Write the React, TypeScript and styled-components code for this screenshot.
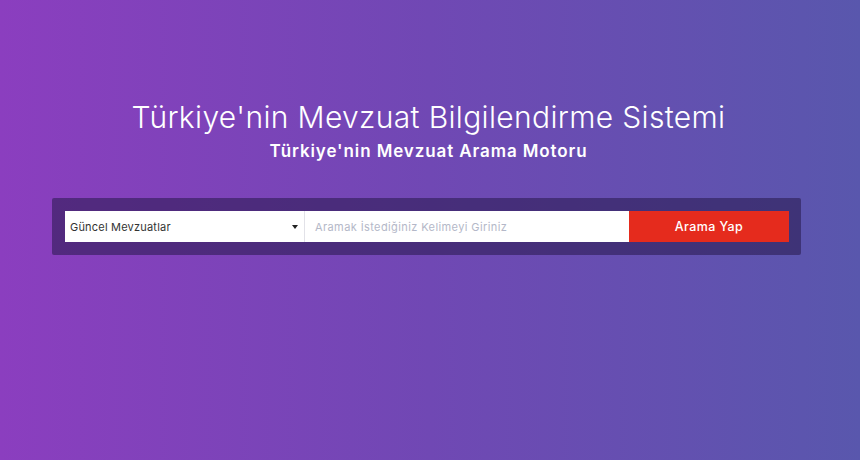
import React from "react";
import styled, { createGlobalStyle } from "styled-components";

const Global = createGlobalStyle`
  html, body { margin: 0; padding: 0; }
  body { font-family: "Inter", "Open Sans", sans-serif; }
  * { box-sizing: border-box; }
`;

const Page = styled.div`
  width: 860px;
  height: 460px;
  background: linear-gradient(to right, #8b3ebf 0%, #7048b4 50%, #5957ad 100%);
  display: flex;
  flex-direction: column;
  align-items: center;
  padding-top: 96px;
`;

const Title = styled.h1`
  margin: 0 0 0 -3px;
  color: #ffffff;
  font-family: "Inter", sans-serif;
  font-weight: 300;
  font-size: 30px;
  line-height: 42px;
  letter-spacing: 0.35px;
`;

const Subtitle = styled.h2`
  margin: 2px 0 0 -3px;
  color: #ffffff;
  font-family: "Inter", sans-serif;
  font-weight: 600;
  font-size: 17px;
  line-height: 22px;
  letter-spacing: 0.9px;
`;

const SearchPanel = styled.div`
  margin-top: 36px;
  width: 749px;
  margin-right: 7px;
  padding: 13px 12px 13px 13px;
  background: rgba(38, 24, 74, 0.55);
  border-radius: 2px;
  display: flex;
`;

const Select = styled.div`
  width: 240px;
  height: 31px;
  background: #fff;
  display: flex;
  align-items: center;
  justify-content: space-between;
  padding: 0 6px 0 5px;
  font-family: "Inter", sans-serif;
  font-size: 11px;
  letter-spacing: 0.2px;
  color: #333;
  border-right: 1px solid #e2e2e8;
`;

const Caret = styled.span`
  width: 0;
  height: 0;
  border-left: 3px solid transparent;
  border-right: 3px solid transparent;
  border-top: 4px solid #222;
  margin-top: 1px;
`;

const Input = styled.div`
  flex: 1;
  height: 31px;
  background: #fff;
  display: flex;
  align-items: center;
  padding-left: 10px;
  font-family: "Inter", sans-serif;
  font-size: 11px;
  letter-spacing: 0.4px;
  color: #b4b8c8;
`;

const Button = styled.div`
  width: 160px;
  height: 31px;
  background: #e52b1d;
  color: #fff;
  display: flex;
  align-items: center;
  justify-content: center;
  font-family: "Inter", sans-serif;
  font-weight: 500;
  font-size: 12.5px;
  letter-spacing: 0.4px;
`;

export default function App() {
  return (
    <>
      <Global />
      <Page>
        <Title>Türkiye'nin Mevzuat Bilgilendirme Sistemi</Title>
        <Subtitle>Türkiye'nin Mevzuat Arama Motoru</Subtitle>
        <SearchPanel>
          <Select>
            <span>Güncel Mevzuatlar</span>
            <Caret />
          </Select>
          <Input>Aramak İstediğiniz Kelimeyi Giriniz</Input>
          <Button>Arama Yap</Button>
        </SearchPanel>
      </Page>
    </>
  );
}
